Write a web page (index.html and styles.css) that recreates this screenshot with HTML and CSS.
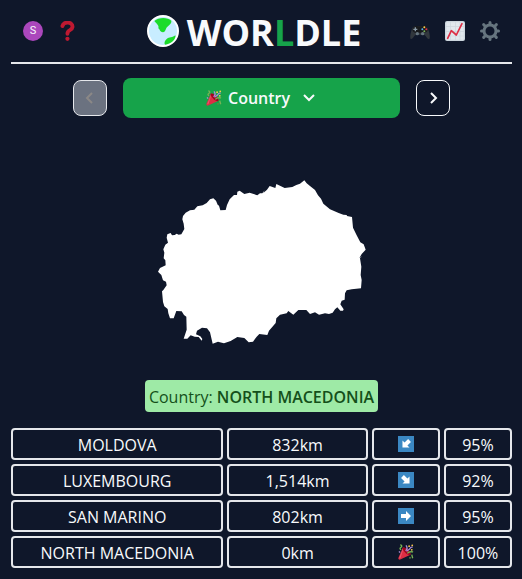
FILE: index.html
```html
<!DOCTYPE html>
<html lang="en">
<head>
<meta charset="utf-8">
<meta name="viewport" content="width=device-width, initial-scale=1">
<title>Worldle</title>
<link rel="stylesheet" href="styles.css">
</head>
<body>
<svg class="defs" aria-hidden="true">
  <symbol id="party" viewBox="0 0 36 36">
    <path fill="#dd2e44" d="M11 8 1 31c-1 3 1 5 4 4l23-11C29 18 18 7 11 8Z"/>
    <path fill="#ea596e" d="M12 12 6 30l-4 3 9-22Z"/>
    <path fill="#a0041e" d="M12 8c6-1 17 10 16 16-2 3-9-1-13-6-4-4-6-9-3-10Z"/>
    <path fill="none" stroke="#aa8dd8" stroke-width="3" d="M17 15c5-4 4-8 1-12M2 17l3 2"/>
    <path fill="none" stroke="#77b255" stroke-width="3" d="M5 2c5 0 4 4 1 6s-1 4 1 5M21 21c4-5 8-4 13-3M31 24l2 8"/>
    <path fill="none" stroke="#aa8dd8" stroke-width="3" d="M20 17c0-5 6-3 7-7s4-3 6-3"/>
    <circle cx="25" cy="5" r="2" fill="#ffcc4d"/><circle cx="32" cy="3" r="2" fill="#ffcc4d"/>
    <circle cx="31" cy="13" r="2" fill="#ffcc4d"/><circle cx="27" cy="31" r="2" fill="#5c913b"/>
  </symbol>
  <symbol id="arrow" viewBox="0 0 16 16">
    <path fill="#fff" d="M3 6h5V3l5 5-5 5v-3H3Z"/>
  </symbol>
</svg>
<div class="page">
  <header class="header">
    <div class="tools">
      <button class="avatar" aria-label="Account">S</button>
      <button class="tool" aria-label="Help">
        <svg class="icon" viewBox="0 0 36 36"><path fill="none" stroke="#be1931" stroke-width="7" stroke-linecap="round" d="M8 9c2-9 19-8 18 2-1 7-9 4-9 12"/><circle cx="17" cy="32" r="3.8" fill="#be1931"/></svg>
      </button>
    </div>
    <h1 class="brand">
      <svg class="globe" viewBox="0 0 96 96" aria-hidden="true">
        <circle cx="48" cy="48" r="45" fill="#c8edff" stroke="#fff" stroke-width="6"/>
        <path fill="#1cdc2a" d="M22 18C34 7 61 6 73 17c2 6-5 12-10 17-8 5-6 17-15 18-9 0-9-9-14-12 3-9-5-13-12-22ZM85 61c4 10-14 28-31 28-4-6 0-12 5-17 7-6 18-4 26-11Z"/>
      </svg>
      <span class="wordmark">WOR<span class="accent">L</span>DLE</span>
    </h1>
    <div class="tools">
      <button class="tool" aria-label="Other games">
        <svg class="icon" viewBox="0 0 60 60">
          <path fill="#31373d" d="M5 26C9 14 14 15 22 16h16c8-1 13-2 17 10 4 10 6 24 3 28-8 0-9-11-16-13H18C11 43 10 54 2 54c-3-6 0-19 3-28Z"/>
          <path fill="#17191c" d="M8 22c4-9 14-8 20-6h6c9-3 14-2 18 6 3 10-3 13-9 13H17C9 34 6 30 8 22Z"/>
          <path fill="none" stroke="#8899a6" stroke-width="4" d="M16 19v12M10 25h12"/>
          <circle cx="22" cy="38" r="5" fill="#66757f"/><circle cx="38" cy="38" r="5" fill="#66757f"/>
          <circle cx="43" cy="19" r="3" fill="#ffcc4d"/><circle cx="49" cy="25" r="3" fill="#dd2e44"/><circle cx="37" cy="25" r="3" fill="#55acee"/><circle cx="43" cy="31" r="3" fill="#77b255"/>
        </svg>
      </button>
      <button class="tool" aria-label="Statistics">
        <svg class="icon" viewBox="0 0 60 60">
          <rect width="60" height="60" rx="6" fill="#ccd6dd"/>
          <path fill="#e1e8ed" d="M4 4h12v12H4zM18 4h12v12H18zM32 4h12v12H32zM46 4h10v12H46zM4 18h12v12H4zM18 18h12v12H18zM32 18h12v12H32zM46 18h10v12H46zM4 32h12v12H4zM18 32h12v12H18zM32 32h12v12H32zM46 32h10v12H46zM4 46h12v10H4zM18 46h12v10H18zM32 46h12v10H32zM46 46h10v10H46z"/>
          <path fill="none" stroke="#dd2e44" stroke-width="5" stroke-linecap="round" stroke-linejoin="round" d="m8 52 11-23 15 13L51 8"/>
        </svg>
      </button>
      <button class="tool" aria-label="Settings">
        <svg class="icon" viewBox="-30 -30 60 60">
          <g stroke="#66757f" fill="none"><circle r="18" stroke-width="9"/>
          <path stroke-width="9" stroke-linecap="round" d="M0-20v-5.500M0 20v5.500M-20 0h-5.500M20 0h5.500M-15-15l-4-4M15 15l4 4M-15 15l-4 4M15-15l4-4"/></g>
        </svg>
      </button>
    </div>
  </header>
  <main>
    <nav class="rounds" aria-label="Rounds">
      <button class="step" disabled aria-label="Previous round"><svg class="chevron" viewBox="0 0 16 16"><path d="m10 3-5 5 5 5"/></svg></button>
      <label class="picker">
        <svg class="emoji" aria-hidden="true"><use href="#party"/></svg>
        <select class="picker-select" aria-label="Round"><option>Country</option></select>
        <svg class="chevron" viewBox="0 0 16 16" aria-hidden="true"><path d="m3 5 5 5 5-5"/></svg>
      </label>
      <button class="step" aria-label="Next round"><svg class="chevron" viewBox="0 0 16 16"><path d="m6 3 5 5-5 5"/></svg></button>
    </nav>
    <div class="map">
      <svg class="shape" viewBox="0 0 672 540" role="img" aria-label="Country outline">
        <path fill="#fff" d="M41 265 43 248 40 238 46 224 54 218 50 203 52 193 62 189 66 196 74 195 80 191 86 194 94 193 103 177 101 161 97 148 99 138 107 128 120 121 133 119 142 109 158 106 170 99 180 88 190 85 198 92 203 104 207 107 211 121 227 120 231 105 239 88 252 75 261 75 262 65 269 62 283 72 299 68 322 76 330 70 337 70 344 61 340 69 351 59 359 48 376 54 379 42 404 54 427 51 439 45 450 41 463 31 470 40 480 48 495 60 504 76 513 86 520 101 540 118 566 129 580 134 590 135 591 138 606 141 609 173 620 196 631 217 641 223 647 239 635 252 628 265 637 258 630 265 634 290 632 315 635 330 633 355 605 358 590 361 585 370 584 389 575 392 571 403 581 418 579 422 571 422 562 412 555 418 548 428 537 432 525 430 507 434 495 427 480 432 469 420 445 420 430 434 415 423 410 430 390 434 379 445 377 459 357 482 352 495 328 492 320 500 309 515 296 517 283 504 262 501 242 513 222 520 204 515 188 521 180 487 171 475 156 473 141 482 138 493 151 499 157 507 155 512 146 501 134 500 122 496 112 506 101 506 110 479 109 440 102 435 95 424 79 423 71 445 60 445 55 430 53 417 43 409 39 396 36 364 40 360 50 346 48 335 39 331 34 315 24 305 30 294 47 286 46 271Z"/>
      </svg>
    </div>
    <p class="answer">Country: <strong>NORTH MACEDONIA</strong></p>
    <table class="guesses" aria-label="Guesses">
      <tbody>
        <tr><td>MOLDOVA</td><td>832km</td><td><svg class="direction southwest" role="img" aria-label="Southwest"><use href="#arrow"/></svg></td><td>95%</td></tr>
        <tr><td>LUXEMBOURG</td><td>1,514km</td><td><svg class="direction southeast" role="img" aria-label="Southeast"><use href="#arrow"/></svg></td><td>92%</td></tr>
        <tr><td>SAN MARINO</td><td>802km</td><td><svg class="direction" role="img" aria-label="East"><use href="#arrow"/></svg></td><td>95%</td></tr>
        <tr><td>NORTH MACEDONIA</td><td>0km</td><td><svg class="emoji" role="img" aria-label="Correct"><use href="#party"/></svg></td><td>100%</td></tr>
      </tbody>
    </table>
  </main>
</div>
</body>
</html>
```
FILE: styles.css
```css
* { box-sizing: border-box; }
body {
  margin: 0;
  background: #0f172a;
  color: #f8fafc;
  font: 16px/24px "Segoe UI", "Open Sans", "Noto Sans", sans-serif;
}
button, select { font: inherit; color: inherit; padding: 0; }
svg { display: block; }
.defs { display: none; }
.page { max-width: 522px; margin: 0 auto; padding: 0 10px 12px 11px; }

.header {
  display: flex;
  align-items: center;
  justify-content: space-between;
  height: 64px;
  padding: 0 12px;
  border-bottom: 2px solid #e5e7eb;
}
.tools { display: flex; gap: 15px; flex: 1; }
.tools:last-child { justify-content: flex-end; }
.avatar, .tool { width: 20px; height: 20px; border: 0; background: none; }
.avatar { border-radius: 50%; background: #ab47bc; font: 11px/20px Roboto, sans-serif; }
.tool { display: grid; place-items: center; }
.icon { width: 20px; height: 20px; }
.brand {
  display: flex;
  align-items: center;
  gap: 8px;
  margin: 0 15px 0 0;
  font-size: 36px;
  line-height: 40px;
  font-weight: 700;
}
.wordmark { padding-top: 4px; }
.globe { width: 32px; height: 32px; }
.accent { color: #16a34a; }

.rounds { display: flex; align-items: center; gap: 16px; margin: 14px 62px 0; }
.step {
  display: grid;
  place-items: center;
  width: 34px;
  height: 36px;
  border: 1px solid #f8fafc;
  border-radius: 8px;
  background: none;
}
.step:disabled { background: #6b7280; border-color: #e5e7eb; color: #8b8886; }
.chevron {
  width: 16px;
  height: 16px;
  fill: none;
  stroke: currentColor;
  stroke-width: 2;
}
.picker {
  display: flex;
  flex: 1;
  align-items: center;
  justify-content: center;
  gap: 6px;
  height: 40px;
  border-radius: 8px;
  background: #16a34a;
}
.picker-select { appearance: none; border: 0; background: none; font-weight: 600; margin-right: 4px; }
.emoji { width: 16px; height: 16px; }

.map { display: grid; place-items: center; padding: 52px 0 30px; }
.shape { width: 224px; height: 180px; }
.answer {
  width: fit-content;
  margin: 0 auto 16px;
  padding: 5px 4px 3px;
  border-radius: 4px;
  background: #9eeaa6;
  color: #14501a;
}
.answer strong { font-weight: 600; }

.guesses, .guesses tbody { display: grid; gap: 4px; }
.guesses tr { display: grid; grid-template-columns: repeat(7, 1fr); gap: 4px; }
.guesses td {
  display: flex;
  align-items: center;
  justify-content: center;
  height: 32px;
  padding: 2px 0 0;
  border: 2px solid #e5e7eb;
  border-radius: 4px;
}
.guesses td:nth-child(1) { grid-column: span 3; }
.guesses td:nth-child(2) { grid-column: span 2; }
.guesses td:nth-child(3) { padding: 0; }
.direction { width: 16px; height: 16px; background: #3b88c3; }
.southwest use { transform: rotate(135deg); transform-origin: 8px 8px; }
.southeast use { transform: rotate(45deg); transform-origin: 8px 8px; }
```
